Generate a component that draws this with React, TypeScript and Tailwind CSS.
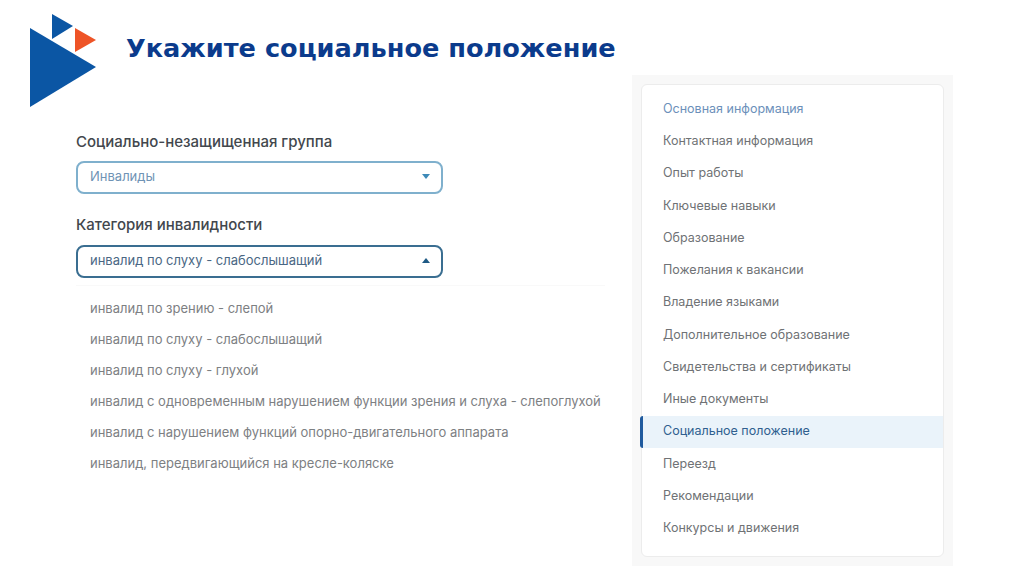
import React from "react";

const sections = [
    "Основная информация",
    "Контактная информация",
    "Опыт работы",
    "Ключевые навыки",
    "Образование",
    "Пожелания к вакансии",
    "Владение языками",
    "Дополнительное образование",
    "Свидетельства и сертификаты",
    "Иные документы",
    "Социальное положение",
    "Переезд",
    "Рекомендации",
    "Конкурсы и движения",
];

const options = [
    "инвалид по зрению - слепой",
    "инвалид по слуху - слабослышащий",
    "инвалид по слуху - глухой",
    "инвалид с одновременным нарушением функции зрения и слуха - слепоглухой",
    "инвалид с нарушением функций опорно-двигательного аппарата",
    "инвалид, передвигающийся на кресле-коляске",
];

const App = () => {
    return (
        <div className="w-[1024px] h-[575px] overflow-hidden bg-white flex font-['Inter',sans-serif]">
            <div className="w-[632px] shrink-0 pt-[14px] pl-[30px]">
                <div className="flex items-start">
                    <svg width="66" height="93" viewBox="0 0 66 93" className="shrink-0">
                        <polygon points="0,14 0,93 66,53" fill="#0b56a4"/>
                        <polygon points="22,0 22,25 43,12" fill="#0b56a4"/>
                        <polygon points="45,14 45,38 66,26" fill="#ee5427"/>
                    </svg>
                    <h1 className="ml-[30px] mt-[18px] text-[25.6px] leading-[32px] font-bold whitespace-nowrap text-[#0b3b8c] font-['DejaVu_Sans',sans-serif]">
                        Укажите социальное положение
                    </h1>
                </div>

                <div className="ml-[46px] mt-[25px]">
                    <p className="text-[15px] leading-[20px] font-medium text-[#42474d]">Социально-незащищенная группа</p>
                    <div className="mt-[9px] w-[367px] h-[33px] pl-[12px] pr-[11px] pb-[2px] flex items-center justify-between rounded-lg border-2 border-[#7fb0cd]">
                        <span className="text-[13px] text-[#6f93b5]">Инвалиды</span>
                        <span className="w-0 h-0 border-x-[4.5px] border-x-transparent border-t-[5px] border-t-[#3d8ab8]"/>
                    </div>

                    <p className="mt-[21px] text-[15px] leading-[20px] font-medium text-[#42474d]">Категория инвалидности</p>
                    <div className="mt-[10px] w-[367px] h-[33px] pl-[12px] pr-[11px] pb-[2px] flex items-center justify-between rounded-lg border-2 border-[#3a6e91]">
                        <span className="text-[13px] text-[#4a6784]">инвалид по слуху - слабослышащий</span>
                        <span className="w-0 h-0 border-x-[4.5px] border-x-transparent border-b-[5px] border-b-[#1f5a85]"/>
                    </div>

                    <div className="mt-[7px] w-[529px] pt-[7px] pl-[14px] border-t border-[#f9f9f9]">
                        {options.map((o) => (
                            <div key={o} className="h-[31px] flex items-center whitespace-nowrap text-[13px] text-[#7d8083]">
                                {o}
                            </div>
                        ))}
                    </div>
                </div>
            </div>

            <div className="pt-[75px]">
                <div className="w-[321px] h-[491px] bg-[#f8f8f8] p-[9px]">
                    <div className="relative h-[473px] pt-[8px] bg-white rounded-md border border-[#ececec]">
                        {sections.map((s, i) => (
                            <div
                                key={s}
                                className={
                                    i === 10
                                        ? "relative h-[32.25px] pl-[21px] flex items-center whitespace-nowrap text-[12.5px] text-[#2f5f8f] bg-[#eaf3fa]"
                                        : i === 0
                                            ? "h-[32.25px] pl-[21px] flex items-center whitespace-nowrap text-[12.5px] text-[#6c90ba]"
                                            : "h-[32.25px] pl-[21px] flex items-center whitespace-nowrap text-[12.5px] text-[#6f7275]"
                                }
                            >
                                {i === 10 && <span className="absolute left-[-2px] top-0 bottom-0 w-[3px] rounded-l bg-[#1f5a9e]"/>}
                                {s}
                            </div>
                        ))}
                    </div>
                </div>
            </div>
        </div>
    );
};

export default App;
